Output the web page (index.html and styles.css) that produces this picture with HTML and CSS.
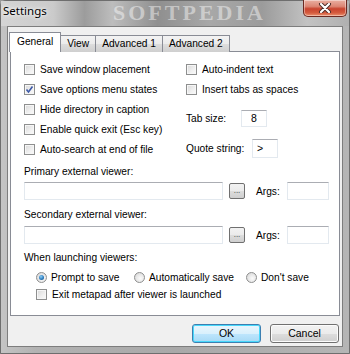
FILE: index.html
```html
<!DOCTYPE html>
<html lang="en">
<head>
  <meta charset="UTF-8">
  <title>Settings</title>
  <link rel="stylesheet" href="styles.css">
</head>
<body>
  <div class="window">
    <!-- Title Bar -->
    <div class="titlebar">
      <span class="title">Settings</span>
      <span class="watermark">SOFTPEDIA</span>
      <div class="close">
        <svg width="14" height="10" viewBox="0 0 14 10">
          <path d="M3 1 L11 9 M11 1 L3 9" stroke="#4a2a26" stroke-width="4" stroke-linecap="round"/>
          <path d="M3 1 L11 9 M11 1 L3 9" stroke="#ffffff" stroke-width="2.2" stroke-linecap="round"/>
        </svg>
      </div>
    </div>

    <!-- Client Area -->
    <div class="client">
      <div class="tabs">
        <div class="tab active">General</div>
        <div class="tab">View</div>
        <div class="tab">Advanced 1</div>
        <div class="tab">Advanced 2</div>
      </div>

      <div class="panel">
        <div class="options">
          <div class="col-left">
            <div class="check"><span class="box"></span>Save window placement</div>
            <div class="check"><span class="box checked">
              <svg width="9" height="9" viewBox="0 0 9 9"><path d="M1.5 4.5 L3.5 7 L7.5 1.5" fill="none" stroke="#3e5aa8" stroke-width="1.6"/></svg>
            </span>Save options menu states</div>
            <div class="check"><span class="box"></span>Hide directory in caption</div>
            <div class="check"><span class="box"></span>Enable quick exit (Esc key)</div>
            <div class="check"><span class="box"></span>Auto-search at end of file</div>
          </div>
          <div class="col-right">
            <div class="check"><span class="box"></span>Auto-indent text</div>
            <div class="check"><span class="box"></span>Insert tabs as spaces</div>
            <div class="field tab-size">
              <span class="field-name">Tab size:</span>
              <span class="input small">8</span>
            </div>
            <div class="field quote">
              <span class="field-name">Quote string:</span>
              <span class="input small left">&gt;</span>
            </div>
          </div>
        </div>

        <div class="label primary">Primary external viewer:</div>
        <div class="viewer-row">
          <span class="input wide"></span>
          <span class="browse">...</span>
          <span class="args-name">Args:</span>
          <span class="input args"></span>
        </div>

        <div class="label secondary">Secondary external viewer:</div>
        <div class="viewer-row">
          <span class="input wide"></span>
          <span class="browse">...</span>
          <span class="args-name">Args:</span>
          <span class="input args"></span>
        </div>

        <div class="label launching">When launching viewers:</div>
        <div class="radios">
          <div class="radio-item first"><span class="radio selected"></span>Prompt to save</div>
          <div class="radio-item second"><span class="radio"></span>Automatically save</div>
          <div class="radio-item"><span class="radio"></span>Don't save</div>
        </div>
        <div class="check exit"><span class="box"></span>Exit metapad after viewer is launched</div>
      </div>

      <div class="buttons">
        <div class="btn default">OK</div>
        <div class="btn">Cancel</div>
      </div>
    </div>
  </div>
</body>
</html>
```

FILE: styles.css
```css
:root {
  --face: #f0f0f0;
  --tab-border: #898c95;
  --box-border: #8e8f8f;
  --field-border: #abadb3;
}

* {
  margin: 0;
  padding: 0;
  box-sizing: border-box;
}

body {
  font-family: 'Liberation Sans', Arial, sans-serif;
  font-size: 10.2px;
  color: #000;
  background: #9a9a9a;
  width: 350px;
  height: 354px;
  overflow: hidden;
}

.window {
  width: 350px;
  height: 354px;
  display: flex;
  flex-direction: column;
  background: linear-gradient(90deg, #c4c4c4 0%, #b2b2b2 10%, #a9a9a9 50%, #b5b5b5 100%);
  border: 1px solid #6e6e6e;
  border-radius: 6px 6px 0 0;
}

/* Title bar */
.titlebar {
  height: 25px;
  position: relative;
  display: flex;
  justify-content: space-between;
  align-items: flex-start;
  background: linear-gradient(90deg, #d4d4d4 0%, #cbcbcb 15%, #9c9c9c 24%, #bdbdbd 32%, #8f8f8f 45%, #a8a8a8 60%, #9b9b9b 75%, #c2c2c2 88%, #b0b0b0 100%);
}

.title {
  font-family: 'Noto Sans', 'Liberation Sans', sans-serif;
  font-size: 11.5px;
  margin: 2px 0 0 2px;
  text-shadow: 0 0 6px #fff, 0 0 3px #fff;
  position: relative;
  z-index: 1;
}

.watermark {
  position: absolute;
  left: 112px;
  top: 1px;
  font-family: 'Liberation Serif', serif;
  font-weight: 700;
  font-size: 22px;
  line-height: 22px;
  letter-spacing: 3px;
  color: rgba(255, 255, 255, 0.45);
}

.close {
  width: 44px;
  height: 17px;
  margin: -1px 2px 0 0;
  border: 1px solid #6b2a22;
  border-top: none;
  border-radius: 0 0 5px 5px;
  background: linear-gradient(180deg, #eab0a2 0%, #dc8674 40%, #c9442f 55%, #d45b3e 80%, #ec9270 100%);
  box-shadow: inset 0 0 0 1px rgba(255, 255, 255, 0.4);
  display: flex;
  align-items: center;
  justify-content: center;
  position: relative;
  z-index: 1;
}

/* Client area */
.client {
  flex: 1;
  margin: 0 6px 6px 6px;
  background: var(--face);
  border: 1px solid #7d7d7d;
  padding: 5px 2px 0 1px;
  display: flex;
  flex-direction: column;
}

.tabs {
  display: flex;
  align-items: flex-end;
  height: 20px;
  margin-bottom: -1px;
  position: relative;
  z-index: 1;
}

.tab {
  height: 17px;
  padding: 0 6px;
  line-height: 15px;
  border: 1px solid var(--tab-border);
  border-bottom: none;
  border-left: none;
  background: linear-gradient(180deg, #f3f3f3 0%, #ebebeb 50%, #dddddd 51%, #cfcfcf 100%);
}

.tab.active {
  height: 20px;
  padding: 0 7px;
  line-height: 17px;
  border-left: 1px solid var(--tab-border);
  background: #fff;
}

.panel {
  margin-left: 1px;
  height: 265px;
  border: 1px solid var(--tab-border);
  background: #fff;
  padding: 7px 0 0 13px;
}

/* Checkbox rows */
.options {
  display: flex;
}

.col-left {
  width: 162px;
}

.check {
  height: 20px;
  display: flex;
  align-items: center;
  white-space: nowrap;
}

.box {
  width: 11px;
  height: 11px;
  margin-right: 5px;
  border: 1px solid var(--box-border);
  background: linear-gradient(135deg, #d8d8d8 0%, #f0f0f0 60%, #fafafa 100%);
  box-shadow: inset 0 0 0 1px #f6f6f6;
  display: flex;
  align-items: center;
  justify-content: center;
  flex-shrink: 0;
}

.field {
  display: flex;
  align-items: center;
}

.tab-size {
  height: 20px;
  margin-top: 9px;
}

.tab-size .field-name {
  width: 55px;
}

.quote {
  height: 20px;
  margin-top: 10px;
}

.quote .field-name {
  width: 66px;
}

.input {
  display: inline-block;
  background: #fff;
  border: 1px solid #e3e9ef;
  border-top-color: var(--field-border);
  line-height: 15px;
}

.input.small {
  width: 26px;
  height: 17px;
  text-align: center;
  font-size: 10.5px;
}

.input.small.left {
  text-align: left;
  padding-left: 4px;
  height: 19px;
  line-height: 17px;
}

/* Viewer fields */
.label {
  height: 14px;
  line-height: 14px;
}

.label.primary {
  margin-top: 6px;
}

.label.secondary {
  margin-top: 8px;
}

.label.launching {
  margin-top: 7px;
}

.viewer-row {
  display: flex;
  align-items: center;
  height: 18px;
  margin-top: 3px;
}

.label.secondary + .viewer-row {
  margin-top: 4px;
}

.input.wide {
  width: 199px;
  height: 18px;
}

.browse {
  width: 16px;
  height: 16px;
  margin-left: 6px;
  border: 1px solid #707070;
  border-radius: 2px;
  background: linear-gradient(180deg, #f2f2f2 0%, #ebebeb 50%, #dddddd 51%, #cfcfcf 100%);
  font-size: 8px;
  line-height: 14px;
  text-align: center;
  color: #333;
}

.args-name {
  margin-left: 11px;
  width: 31px;
}

.input.args {
  width: 42px;
  height: 18px;
}

/* Radios */
.radios {
  display: flex;
  height: 16px;
  margin-top: 4px;
  padding-left: 12px;
}

.radio-item {
  display: flex;
  align-items: center;
  white-space: nowrap;
}

.radio-item.first {
  width: 98px;
}

.radio-item.second {
  width: 112px;
}

.radio {
  width: 11px;
  height: 11px;
  margin-right: 4px;
  border-radius: 50%;
  border: 1px solid var(--box-border);
  background: radial-gradient(circle at 60% 60%, #fbfbfb 0%, #e8e8e8 50%, #d0d0d0 100%);
  display: flex;
  align-items: center;
  justify-content: center;
}

.radio.selected::after {
  content: '';
  width: 5px;
  height: 5px;
  border-radius: 50%;
  background: radial-gradient(circle at 40% 35%, #8fd0f5 0%, #2c7cc0 55%, #13456f 100%);
}

.check.exit {
  height: 16px;
  margin-top: 1px;
  padding-left: 12px;
}

/* Dialog buttons */
.buttons {
  display: flex;
  justify-content: flex-end;
  gap: 9px;
  margin-top: 8px;
  padding-right: 1px;
}

.btn {
  width: 69px;
  height: 19px;
  border: 1px solid #707070;
  border-radius: 3px;
  background: linear-gradient(180deg, #f2f2f2 0%, #ebebeb 50%, #dddddd 51%, #cfcfcf 100%);
  box-shadow: inset 0 0 0 1px #fcfcfc;
  text-align: center;
  line-height: 17px;
  font-size: 10.5px;
}

.btn.default {
  border-color: #3c7fb1;
  box-shadow: inset 0 0 0 1px #48d8fb;
  background: linear-gradient(180deg, #eaf6fd 0%, #d9f0fc 50%, #bee6fd 51%, #a7d9f5 100%);
}
```
